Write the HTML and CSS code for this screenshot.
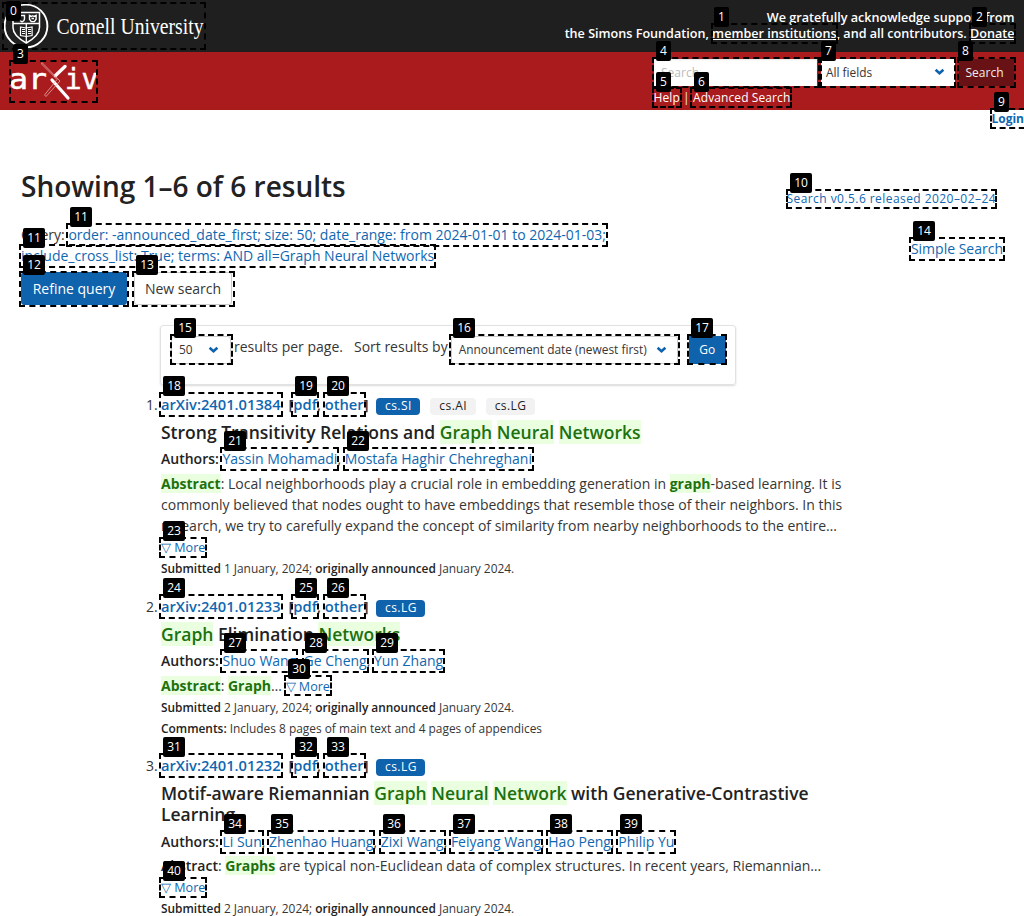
FILE: index.html
```html
<!DOCTYPE html>
<html lang="en">
<head>
<meta charset="utf-8">
<title>Search | arXiv e-print repository</title>
<link rel="stylesheet" href="styles.css">
</head>
<body>
<header>
  <div class="cornell-bar">
    <svg class="cornell" width="206" height="50" viewBox="0 0 206 50">
      <circle cx="26" cy="26" r="21.4" fill="none" stroke="#fff" stroke-width="1.9"/>
      <path d="M13 12.500h26.500v15c0 7-6 11.500-13.200 15.500C19 39 13 34.500 13 27.500z" fill="none" stroke="#fff" stroke-width="1.5"/>
      <path d="M13 23.500h26.500M26.300 24v18.500" stroke="#fff" stroke-width="1.300"/>
      <path d="M19.500 15.500h5v3.500c0 1.500-1.300 2.300-2.500 2.800-1.500-.6-2.500-1.300-2.500-2.800zM29.500 15.500l2 1 1.300-.8 1.300.8 2-1v3.700l-1.800 2.400h-3l-1.800-2.400zM31.500 18.500h2.500" fill="none" stroke="#fff" stroke-width="1.400"/>
      <path d="M20.500 27l5.800 1 5.800-1v8.500l-5.800 1-5.800-1z" fill="none" stroke="#fff" stroke-width="1.200"/>
      <path d="M22 29.500h3M22 31.500h3M22 33.500h3M28 29.500h3M28 31.500h3M28 33.500h3" stroke="#fff" stroke-width="1"/>
      <text x="56.500" y="33.500" textLength="147" lengthAdjust="spacingAndGlyphs" class="cornell-name">Cornell University</text>
    </svg>
    <div class="ack">We gratefully acknowledge support from<br>the Simons Foundation, <a>member institutions</a>, and all contributors. <a>Donate</a></div>
  </div>
  <div class="search-bar">
    <svg class="arxiv" width="88" height="42" viewBox="0 0 88 42">
      <text x="-2" y="29" textLength="38" lengthAdjust="spacingAndGlyphs" class="arxiv-name">ar</text>
      <text x="54" y="29" textLength="33" lengthAdjust="spacingAndGlyphs" class="arxiv-name">iv</text>
      <path d="M41 20L57 38" stroke="#fff" stroke-width="3.200" stroke-linecap="round"/>
      <path d="M44.500 15.500L54 6.500" stroke="#fff" stroke-width="3.400" stroke-linecap="round"/>
      <path d="M31 2.500L49 21 35 36.500l-1.500-1.500L46 19.500 30.500 4z" fill="none" stroke="#e8a9a9" stroke-width=".8"/>
    </svg>
    <div class="search-form">
      <div class="fields">
        <div class="input">Search...</div>
        <div class="picker fieldpick">All fields<svg class="chev" width="9" height="6" viewBox="0 0 9 6"><path d="M.6 .8l3.900 3.400 3.900-3.400"/></svg></div>
        <div class="go-search">Search</div>
      </div>
      <div class="help"><a>Help</a> | <a>Advanced Search</a></div>
    </div>
  </div>
</header>
<div class="login">Login</div>
<main>
  <div class="level">
    <h1>Showing 1–6 of 6 results</h1>
    <a class="version">Search v0.5.6 released 2020–02–24</a>
  </div>
  <div class="query-row">
    <div class="query">Query: <a>order: -announced_date_first; size: 50; date_range: from 2024-01-01 to 2024-01-03; include_cross_list: True; terms: AND all=Graph Neural Networks</a></div>
    <a class="simple">Simple Search</a>
  </div>
  <div class="buttons"><a class="btn primary">Refine query</a><a class="btn">New search</a></div>
  <div class="sortbox">
    <div class="picker perpage">50<svg class="chev" width="9" height="6" viewBox="0 0 9 6"><path d="M.6 .8l3.900 3.400 3.900-3.400"/></svg></div>
    <span class="lab1">results per page.</span><span class="lab2">Sort results by</span>
    <div class="picker sortpick">Announcement date (newest first)<svg class="chev" width="9" height="6" viewBox="0 0 9 6"><path d="M.6 .8l3.900 3.400 3.900-3.400"/></svg></div>
    <div class="go">Go</div>
  </div>
  <ol>
    <li>
      <div class="idline"><span class="num">1.</span><b><a>arXiv:2401.01384</a></b><span class="formats">[<a>pdf</a>, <a>other</a>]</span><span class="tag main">cs.SI</span><span class="tag">cs.AI</span><span class="tag">cs.LG</span></div>
      <h2>Strong Transitivity Relations and <mark>Graph</mark> <mark>Neural</mark> <mark>Networks</mark></h2>
      <p class="authors"><b>Authors:</b> <a>Yassin Mohamadi</a>, <a>Mostafa Haghir Chehreghani</a></p>
      <p class="abs"><mark>Abstract</mark>: Local neighborhoods play a crucial role in embedding generation in <mark>graph</mark>-based learning. It is commonly believed that nodes ought to have embeddings that resemble those of their neighbors. In this research, we try to carefully expand the concept of similarity from nearby neighborhoods to the entire… <br><a class="more">▽ More</a></p>
      <p class="small"><b>Submitted</b> 1 January, 2024; <b>originally announced</b> January 2024.</p>
    </li>
    <li>
      <div class="idline"><span class="num">2.</span><b><a>arXiv:2401.01233</a></b><span class="formats">[<a>pdf</a>, <a>other</a>]</span><span class="tag main">cs.LG</span></div>
      <h2><mark>Graph</mark> Elimination <mark>Networks</mark></h2>
      <p class="authors"><b>Authors:</b> <a>Shuo Wang</a>, <a>Ge Cheng</a>, <a>Yun Zhang</a></p>
      <p class="abs"><mark>Abstract</mark>: <mark>Graph</mark>… <a class="more">▽ More</a></p>
      <p class="small"><b>Submitted</b> 2 January, 2024; <b>originally announced</b> January 2024.</p>
      <p class="small"><b>Comments:</b> Includes 8 pages of main text and 4 pages of appendices</p>
    </li>
    <li>
      <div class="idline"><span class="num">3.</span><b><a>arXiv:2401.01232</a></b><span class="formats">[<a>pdf</a>, <a>other</a>]</span><span class="tag main">cs.LG</span></div>
      <h2>Motif-aware Riemannian <mark>Graph</mark> <mark>Neural</mark> <mark>Network</mark> with Generative-Contrastive Learning</h2>
      <p class="authors"><b>Authors:</b> <a>Li Sun</a>, <a>Zhenhao Huang</a>, <a>Zixi Wang</a>, <a>Feiyang Wang</a>, <a>Hao Peng</a>, <a>Philip Yu</a></p>
      <p class="abs"><b>Abstract</b>: <mark>Graphs</mark> are typical non-Euclidean data of complex structures. In recent years, Riemannian… <br><a class="more">▽ More</a></p>
      <p class="small"><b>Submitted</b> 2 January, 2024; <b>originally announced</b> January 2024.</p>
    </li>
  </ol>
</main>
<div class="marks" id="marks"></div>
<script src="marks.js"></script>
</body>
</html>
```
FILE: styles.css
```css
* { box-sizing: border-box; margin: 0; padding: 0; }
html { overflow: hidden; }
body { width: 1024px; height: 916px; overflow: hidden; position: relative; background: #fff; color: #363636; font: 14px/21px "Open Sans", "Noto Sans", sans-serif; }
a { color: #0f67b1; }
b { font-weight: 600; color: #222; }
svg { overflow: visible; }
.cornell-bar { height: 52px; background: #1f1f1f; display: flex; justify-content: space-between; }
.cornell-name { font: 22.5px "Liberation Serif", serif; fill: #fff; }
.ack { color: #fff; text-align: right; font: 600 12.6px/16px "Open Sans", sans-serif; padding: 10px 9.5px 0 0; white-space: nowrap; }
.ack a { color: #fff; text-decoration: underline; }
.search-bar { height: 58px; background: #a91b1c; display: flex; justify-content: space-between; }
.arxiv { margin: 8px 0 0 11px; }
.arxiv-name { font: 28px "DejaVu Sans Mono", monospace; fill: #fff; stroke: #fff; stroke-width: .5; }
.search-form { width: 370px; padding-top: 7px; }
.fields { display: flex; height: 27px; font-size: 12px; line-height: 27px; }
.input { width: 163px; background: #fff; color: #bbb; padding-left: 7px; line-height: 28px; margin-right: 4px; box-shadow: inset 0 1px 2px rgba(10,10,10,.1); }
.picker { display: flex; align-items: center; justify-content: space-between; background: #fff; color: #363636; }
.fieldpick { width: 134px; padding: 0 11px 1px 5px; font-size: 11.9px; margin-right: 4px; }
.chev path { fill: none; stroke: #0f62ac; stroke-width: 2.600; }
.go-search { width: 55px; background: #691215; color: #eee; text-align: center; padding-right: 4px; }
.help { color: #eee; font-size: 12px; line-height: 16px; padding-top: 4px; letter-spacing: .1px; margin-left: -.5px; }
.help a { color: #fff; }
.login { height: 18px; text-align: right; color: #0f67b1; font: 700 12px/18px "Open Sans", sans-serif; }
main { padding: 0 21px; }
.level { padding-top: 37px; height: 96px; display: flex; justify-content: space-between; }
h1 { font-size: 28px; line-height: 42px; font-weight: 600; color: #222; }
.version { font-size: 12px; line-height: 18px; margin: 25px 7px 0 0; letter-spacing: .44px; }
.query-row { display: flex; justify-content: space-between; height: 48px; }
.query { width: 590px; }
.simple { margin-top: 14px; }
.buttons { display: flex; gap: 7px; }
.btn { height: 33px; width: 106px; text-align: center; line-height: 32px; border: 1px solid #ccc; border-radius: 3px; color: #363636; }
.btn.primary { background: #0f62ac; border-color: #0f62ac; color: #fff; }
.btn:not(.primary) { width: 98px; }
.sortbox { display: flex; margin: 20px 0 0 139px; width: 576px; height: 60px; border: 1px solid #e2e2e2; border-radius: 3px; box-shadow: 0 1px 2px rgba(0,0,0,.15); padding: 9px 0 0 10px; }
.sortbox .picker { height: 28px; border: 1px solid #ccc; border-radius: 3px; font-size: 11.9px; margin-top: 1px; }
.perpage { width: 60px; padding: 0 12px 1px 7px; }
.lab1 { margin: 1px 11px 0 3px; }
.lab2 { margin: 1px 3px 0 0; }
.sortpick { width: 227px; padding: 0 11px 1px 7px; }
.go { width: 37px; height: 28px; margin: 1px 0 0 11px; background: #0f62ac; color: #fff; font-size: 12px; line-height: 28px; text-align: center; }
ol { list-style: none; margin: 9px 0 0 140px; width: 690px; }
li { margin-bottom: 17px; }
li:nth-child(2) { margin-bottom: 16px; }
.idline { display: flex; height: 21px; font-size: 14.7px; }
.idline b a { display: block; width: 121px; }
.num { margin-left: -22px; width: 22px; padding-left: 7px; font-size: 14px; }
.formats { width: 94px; padding-left: 6.5px; font-weight: 600; }
.tag { height: 17px; line-height: 16px; font-size: 12px; background: #f2f2f2; border-radius: 4px; padding: 0 8.500px 0 9px; margin: 4px 10px 0 0; color: #222; letter-spacing: .45px; }
.tag.main { background: #0f62ac; color: #fff; }
h2 { font-size: 17.5px; line-height: 21px; font-weight: 600; color: #222; margin: 7px 0 5px; }
mark { background: #eaffe0; color: #1d700f; font-weight: 700; }
h2 mark { font-weight: 600; }
.abs { margin-top: 4px; }
li:last-child .abs { margin-top: 3px; }
li:last-child .authors { margin-top: 6px; }
.more { font-size: 12.6px; }
.small { font-size: 11.9px; }
.marks { position: absolute; inset: 0; }
.box { position: absolute; border: 2px dashed #000; }
.tip { position: absolute; height: 20px; background: #000; color: #fff; font-size: 12px; line-height: 20px; text-align: center; border-radius: 2px; }
```
FILE: marks.js
```javascript
// [label, box x, y, width, height, badge x, badge y]
const marks = [
  [0,2,2,204,48,6,1],[1,711,23,127,21,714,7],[2,969,23,47,21,972,7],[3,9,60,89,43,13,44],
  [4,652,57,168,31,656,41],[5,652,87,30,21,656,72],[6,690,87,102,21,694,72],[7,820,57,136,31,821,41],[8,957,57,59,31,958,41],
  [9,990,108,54,21,994,92],[10,786,189,211,20,790,173],[11,66,223,542,24,70,207],[11,19,244,417,24,23,228],
  [12,19,271,110,36,23,255],[13,132,271,103,36,136,255],[14,909,237,96,24,913,221],
  [15,170,334,63,31,174,318],[16,449,334,231,31,453,318],[17,687,334,40,31,691,318],
  [18,159,392,124,25,163,376],[19,291,392,28,25,295,376],[20,323,392,43,25,327,376],[21,220,447,119,24,224,431],[22,343,447,191,24,347,431],
  [23,159,537,48,21,163,521],[24,159,594,124,25,163,578],[25,291,594,28,25,295,578],[26,323,594,43,25,327,578],
  [27,220,649,78,24,224,633],[28,302,649,67,24,305,633],[29,372,649,73,24,376,633],[30,284,675,48,21,288,659],
  [31,159,753,124,25,163,737],[32,291,753,28,25,295,737],[33,323,753,43,25,327,737],
  [34,220,830,44,24,224,814],[35,267,830,108,24,271,814],[36,379,830,67,24,383,814],[37,449,830,94,24,453,814],[38,546,830,67,24,550,814],[39,616,830,60,24,620,814],
  [40,159,877,48,21,163,861]
];
const layer = document.getElementById('marks');
for (const [n, x, y, w, h] of marks) {
  const box = document.createElement('div');
  box.className = 'box';
  box.style.cssText = `left:${x}px;top:${y}px;width:${w}px;height:${h}px`;
  layer.append(box);
}
for (const [n, , , , , x, y] of marks) {
  const tip = document.createElement('div');
  tip.className = 'tip';
  tip.textContent = n;
  tip.style.cssText = `left:${x}px;top:${y}px;width:${n > 9 ? 22 : 15}px`;
  layer.append(tip);
}
```
